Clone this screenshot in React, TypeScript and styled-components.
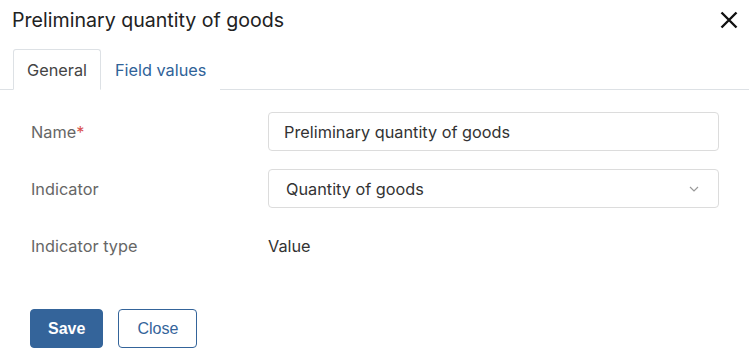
import React, { useState } from 'react'
import styled, { createGlobalStyle } from 'styled-components'

const GlobalStyle = createGlobalStyle`
  body {
    margin: 0;
    background: #ffffff;
    font-family: Inter, "Noto Sans", sans-serif;
  }
`

const Dialog = styled.div`
  width: 749px;
  height: 354px;
  background: #ffffff;
  display: flex;
  flex-direction: column;
`

const Header = styled.div`
  display: flex;
  align-items: center;
  justify-content: space-between;
  padding: 6px 10px 0 12px;
  height: 28px;
`

const Title = styled.h1`
  margin: 0;
  font-size: 19.6px;
  line-height: 28px;
  font-weight: 400;
  color: #222222;
`

const CloseIcon = styled.button`
  width: 20px;
  height: 20px;
  padding: 0;
  border: none;
  background: none;
  display: flex;
  align-items: center;
  justify-content: center;
  cursor: pointer;
`

const Tabs = styled.div`
  display: flex;
  margin-top: 15px;
  padding-left: 13px;
  border-bottom: 1px solid #dde1e5;
  height: 40px;
`

const Tab = styled.div<{ active?: boolean }>`
  display: flex;
  align-items: center;
  padding: 0 13px;
  margin-bottom: -1px;
  font-size: 16.3px;
  color: ${({ active }) => (active ? '#444444' : '#2f6298')};
  background: #ffffff;
  border: 1px solid ${({ active }) => (active ? '#dde1e5' : 'transparent')};
  border-bottom-color: ${({ active }) => (active ? '#ffffff' : 'transparent')};
  border-radius: 3px 3px 0 0;
  cursor: pointer;
`

const Form = styled.div`
  display: grid;
  grid-template-columns: 237px 1fr;
  grid-auto-rows: 39px;
  row-gap: 18px;
  padding: 22px 30px 0 31px;
`

const Label = styled.div`
  display: flex;
  align-items: center;
  font-size: 16.3px;
  color: #666666;
`

const Required = styled.span`
  color: #d9534f;
`

const TextInput = styled.input`
  box-sizing: border-box;
  width: 100%;
  height: 39px;
  padding: 0 15px;
  border: 1px solid #dcdcdc;
  border-radius: 4px;
  font-family: Inter, "Noto Sans", sans-serif;
  font-size: 16.3px;
  color: #333333;
  outline: none;
`

const Select = styled.div`
  box-sizing: border-box;
  height: 39px;
  display: flex;
  align-items: center;
  justify-content: space-between;
  padding: 0 19px 0 17px;
  border: 1px solid #dcdcdc;
  border-radius: 4px;
  font-size: 16.3px;
  color: #333333;
  cursor: pointer;
`

const Value = styled.div`
  display: flex;
  align-items: center;
  font-size: 16.3px;
  color: #333333;
`

const Footer = styled.div`
  display: flex;
  gap: 15px;
  padding: 44px 0 0 30px;
`

const Button = styled.button<{ primary?: boolean }>`
  height: 39px;
  padding: 0 ${({ primary }) => (primary ? '17px' : '18px')};
  border-radius: 4px;
  border: 1px solid #34649a;
  background: ${({ primary }) => (primary ? '#34649a' : '#ffffff')};
  color: ${({ primary }) => (primary ? '#ffffff' : '#34649a')};
  font-family: "Liberation Sans", Arial, sans-serif;
  font-size: 16px;
  font-weight: ${({ primary }) => (primary ? 700 : 400)};
  cursor: pointer;
`

const Chevron = () => (
  <svg width="10" height="6" viewBox="0 0 10 6" fill="none">
    <path d="M1 1l4 4 4-4" stroke="#9a9a9a" strokeWidth="1.2" />
  </svg>
)

export default function App() {
  const [tab, setTab] = useState('general')
  const [name, setName] = useState('Preliminary quantity of goods')

  return (
    <>
      <GlobalStyle />
      <Dialog>
        <Header>
          <Title>Preliminary quantity of goods</Title>
          <CloseIcon aria-label="Close">
            <svg width="18" height="18" viewBox="0 0 18 18">
              <path d="M1.5 1.5l15 15M16.5 1.5l-15 15" stroke="#111111" strokeWidth="2.4" />
            </svg>
          </CloseIcon>
        </Header>
        <Tabs>
          <Tab active={tab === 'general'} onClick={() => setTab('general')}>
            General
          </Tab>
          <Tab active={tab === 'values'} onClick={() => setTab('values')}>
            Field values
          </Tab>
        </Tabs>
        <Form>
          <Label>
            Name<Required>*</Required>
          </Label>
          <TextInput value={name} onChange={(e) => setName(e.target.value)} />
          <Label>Indicator</Label>
          <Select>
            Quantity of goods
            <Chevron />
          </Select>
          <Label>Indicator type</Label>
          <Value>Value</Value>
        </Form>
        <Footer>
          <Button primary>Save</Button>
          <Button>Close</Button>
        </Footer>
      </Dialog>
    </>
  )
}
